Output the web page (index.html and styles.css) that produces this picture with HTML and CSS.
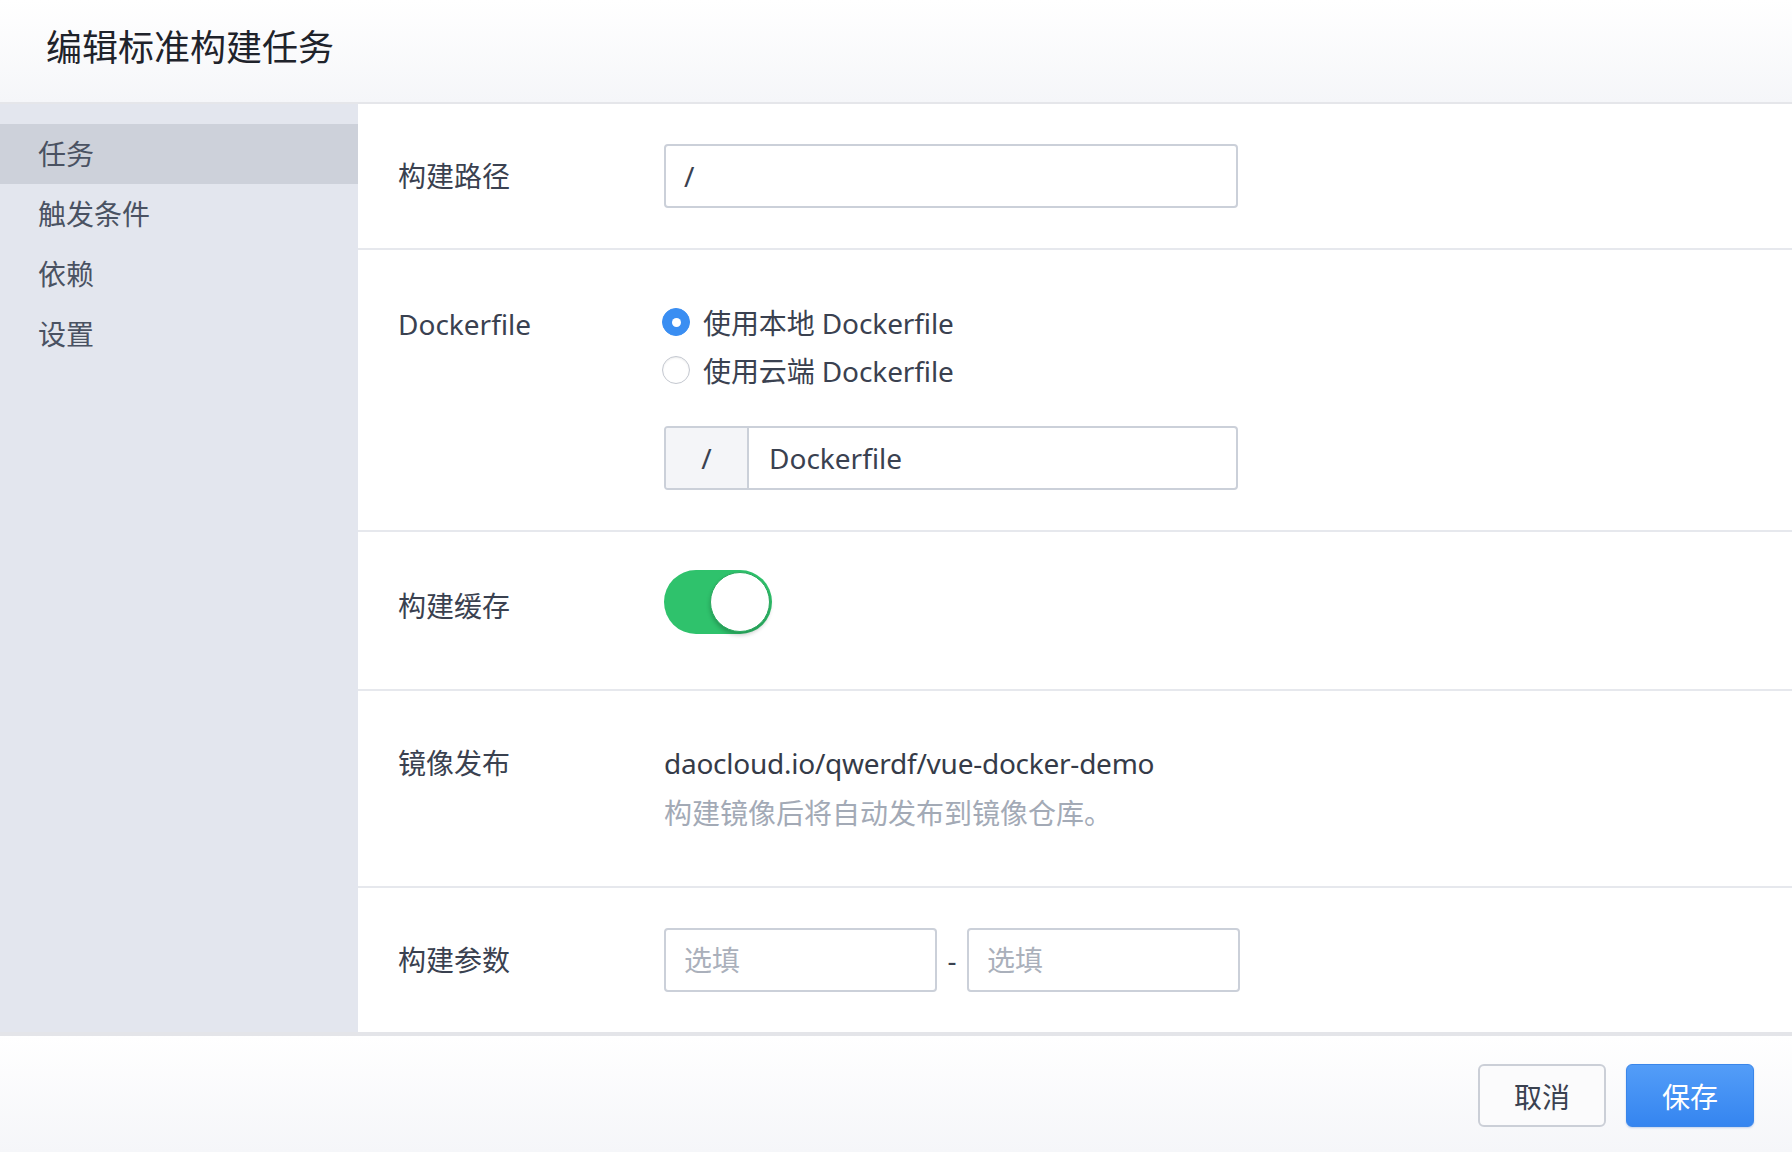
FILE: index.html
```html
<!DOCTYPE html>
<html lang="zh-CN">
<head>
<meta charset="utf-8">
<title>编辑标准构建任务</title>
<link rel="stylesheet" href="styles.css">
</head>
<body>
<div class="app">
  <header class="header">
    <h1 class="title">编辑标准构建任务</h1>
  </header>
  <div class="main">
    <nav class="sidebar">
      <div class="nav-item active">任务</div>
      <div class="nav-item">触发条件</div>
      <div class="nav-item">依赖</div>
      <div class="nav-item">设置</div>
    </nav>
    <section class="content">
      <div class="row row-path">
        <div class="label">构建路径</div>
        <div class="field">
          <div class="input">/</div>
        </div>
      </div>
      <div class="row row-docker">
        <div class="label">Dockerfile</div>
        <div class="field">
          <div class="radios">
            <label class="radio-line"><span class="radio checked"></span><span>使用本地 Dockerfile</span></label>
            <label class="radio-line"><span class="radio"></span><span>使用云端 Dockerfile</span></label>
          </div>
          <div class="input group">
            <span class="prefix">/</span>
            <span class="group-text">Dockerfile</span>
          </div>
        </div>
      </div>
      <div class="row row-cache">
        <div class="label">构建缓存</div>
        <div class="field">
          <div class="toggle"><span class="knob"></span></div>
        </div>
      </div>
      <div class="row row-image">
        <div class="label">镜像发布</div>
        <div class="field">
          <div class="image-name">daocloud.io/qwerdf/vue-docker-demo</div>
          <div class="hint">构建镜像后将自动发布到镜像仓库。</div>
        </div>
      </div>
      <div class="row row-args">
        <div class="label">构建参数</div>
        <div class="field args">
          <div class="input small placeholder">选填</div>
          <span class="dash">-</span>
          <div class="input small placeholder">选填</div>
        </div>
      </div>
    </section>
  </div>
  <footer class="footer">
    <button class="btn btn-cancel">取消</button>
    <button class="btn btn-save">保存</button>
  </footer>
</div>
</body>
</html>
```
FILE: styles.css
```css
* { box-sizing: border-box; }
html, body { margin: 0; padding: 0; }
body {
  font-family: "Noto Sans", "Noto Sans CJK SC", sans-serif;
  color: #3a4150;
  background: #fff;
}
.app {
  display: flex;
  flex-direction: column;
  width: 1792px;
  height: 1152px;
}
.header {
  height: 104px;
  flex: none;
  border-bottom: 2px solid #e5e6ea;
  background: linear-gradient(#ffffff, #f5f6f9);
  display: flex;
  align-items: center;
  padding: 0 0 6px 46px;
}
.title {
  margin: 0;
  font-size: 36px;
  font-weight: 400;
  color: #1f232b;
  line-height: 48px;
}
.main {
  flex: 1;
  display: flex;
  min-height: 0;
}
.sidebar {
  width: 358px;
  flex: none;
  background: #e3e6ee;
  padding-top: 20px;
}
.nav-item {
  height: 60px;
  line-height: 60px;
  padding-left: 38px;
  font-size: 28px;
  color: #4a5262;
}
.nav-item.active { background: #cdd1da; }
.content {
  flex: 1;
  background: #fff;
  display: flex;
  flex-direction: column;
}
.row {
  display: flex;
  border-bottom: 2px solid #e6e8ed;
  padding: 40px 0 40px 40px;
}
.row:last-child { border-bottom: none; }
.label {
  width: 266px;
  flex: none;
  font-size: 28px;
  line-height: 64px;
  color: #3a4150;
}
.field { display: flex; flex-direction: column; }
.input {
  width: 574px;
  height: 64px;
  border: 2px solid #cbd0d9;
  border-radius: 4px;
  padding-left: 18px;
  font-size: 28px;
  line-height: 60px;
  color: #3a4150;
  background: #fff;
}
.row-docker .label { padding-top: 2px; }
.radios { padding-top: 8px; display: flex; flex-direction: column; }
.radio-line {
  display: flex;
  align-items: center;
  height: 48px;
  font-size: 28px;
  gap: 13px;
  color: #3a4150;
  letter-spacing: -0.1px;
}
.radio {
  width: 28px;
  height: 28px;
  margin-left: -2px;
  border-radius: 50%;
  border: 1px solid #c4c8d0;
  background: #fff;
  box-shadow: inset 0 1px 2px rgba(0,0,0,0.08);
  position: relative;
  flex: none;
}
.radio.checked {
  border-color: #3a8ef2;
  background: #3a8ef2;
  box-shadow: none;
}
.radio.checked::after {
  content: "";
  position: absolute;
  width: 9px;
  height: 9px;
  border-radius: 50%;
  background: #fff;
  left: 8.5px;
  top: 8.5px;
}
.input.group {
  margin-top: 32px;
  display: flex;
  padding-left: 0;
  overflow: hidden;
}
.prefix {
  width: 83px;
  flex: none;
  background: #f4f5f8;
  border-right: 2px solid #cbd0d9;
  text-align: center;
}
.group-text { padding-left: 20px; }
.row-cache { padding-top: 38px; padding-bottom: 51px; }
.row-cache .label { padding-top: 4px; }
.toggle {
  width: 108px;
  height: 64px;
  border-radius: 32px;
  background: #2fc26c;
  position: relative;
}
.knob {
  position: absolute;
  right: 2px;
  top: 2px;
  width: 60px;
  height: 60px;
  border-radius: 50%;
  background: #fff;
  border: 1px solid #2aa95e;
  box-shadow: 0 3px 4px rgba(0,0,0,0.22);
}
.row-image { padding-bottom: 55px; }
.image-name {
  font-size: 28px;
  line-height: 64px;
  color: #353b48;
  letter-spacing: -0.25px;
}
.hint {
  font-size: 28px;
  line-height: 36px;
  color: #a3aab6;
}
.field.args {
  flex-direction: row;
  align-items: center;
}
.input.small { width: 273px; }
.placeholder { color: #aab0bb; }
.dash {
  width: 30px;
  text-align: center;
  font-size: 28px;
  color: #3a4150;
}
.footer {
  height: 120px;
  flex: none;
  border-top: 4px solid #e4e5e9;
  background: linear-gradient(#ffffff, #f5f6f9);
  display: flex;
  justify-content: flex-end;
  align-items: center;
  gap: 20px;
  padding: 3px 38px 0 0;
}
.btn {
  width: 128px;
  height: 63px;
  border-radius: 6px;
  font-family: "Noto Sans", "Noto Sans CJK SC", sans-serif;
  font-size: 28px;
  cursor: pointer;
}
.btn-cancel {
  border: 2px solid #cbcfd7;
  background: #fbfbfc;
  color: #3a4150;
}
.btn-save {
  border: 1px solid #3a86ea;
  background: linear-gradient(#539df8, #3585f0);
  color: #fff;
  box-shadow: 0 1px 2px rgba(40,100,200,0.25);
}
```
